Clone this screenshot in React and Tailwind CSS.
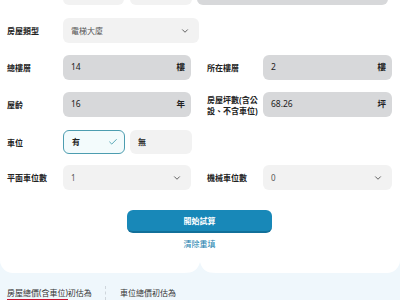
import { Check, ChevronDown } from 'lucide-react'

const FONT = { fontFamily: '"Noto Sans", "Noto Sans CJK TC", sans-serif' }

function Label({ children }) {
  return (
    <div className="w-[56px] shrink-0 text-[8px] leading-[11px] font-bold text-[#222]">{children}</div>
  )
}

function Filled({ value, unit, w = 'w-[128px]' }) {
  return (
    <div className={`${w} h-[25px] rounded-[6px] bg-[#d7d8da] flex items-center justify-between pl-[8px] pr-[6px] text-[8.5px] text-[#222]`}>
      <span>{value}</span>
      <span className="font-bold">{unit}</span>
    </div>
  )
}

function Select({ value, w = 'w-[128px]' }) {
  return (
    <div className={`${w} h-[25px] rounded-[6px] bg-[#f2f2f2] flex items-center justify-between pl-[8px] pr-[9px] text-[8px] text-[#555]`}>
      <span>{value}</span>
      <ChevronDown size={10} strokeWidth={2} className="text-[#444]" />
    </div>
  )
}

export default function App() {
  return (
    <div className="w-[400px] h-[300px] overflow-hidden bg-[#eff7fc]" style={FONT}>
      <div className="relative bg-white rounded-b-[13px] pl-[7px] pr-[8px] pb-[23px]">
        {/* cut-off row above */}
        <div className="flex mt-[-20px] h-[25px]">
          <div className="w-[56px]" />
          <div className="w-[61px] rounded-[6px] bg-[#f2f2f2]" />
          <div className="w-[62px] ml-[6px] rounded-[6px] bg-[#f2f2f2]" />
          <div className="w-[191px] ml-[5px] rounded-[6px] bg-[#d7d8da]" />
        </div>

        <div className="flex items-center mt-[13px]">
          <Label>房屋類型</Label>
          <Select value="電梯大廈" w="w-[136px]" />
        </div>

        <div className="flex items-center gap-[16px] mt-[12px]">
          <div className="flex items-center">
            <Label>總樓層</Label>
            <Filled value="14" unit="樓" />
          </div>
          <div className="flex items-center">
            <Label>所在樓層</Label>
            <Filled value="2" unit="樓" w="w-[129px]" />
          </div>
        </div>

        <div className="flex items-center gap-[16px] mt-[12px]">
          <div className="flex items-center">
            <Label>屋齡</Label>
            <Filled value="16" unit="年" />
          </div>
          <div className="flex items-center">
            <Label>房屋坪數(含公設、不含車位)</Label>
            <Filled value="68.26" unit="坪" w="w-[129px]" />
          </div>
        </div>

        <div className="flex items-center mt-[13px]">
          <Label>車位</Label>
          <div className="w-[62px] h-[24px] rounded-[6px] border-[1.5px] border-[#4d9db0] bg-[#f3fbfc] flex items-center justify-between pl-[8px] pr-[6px] text-[8px] font-bold text-[#222]">
            <span>有</span>
            <Check size={10} strokeWidth={2} className="text-[#3a98a8]" />
          </div>
          <div className="w-[62px] h-[24px] ml-[5px] rounded-[6px] bg-[#f2f2f2] flex items-center pl-[8px] text-[8px] font-bold text-[#222]">
            無
          </div>
        </div>

        <div className="flex items-center gap-[16px] mt-[11px]">
          <div className="flex items-center">
            <Label>平面車位數</Label>
            <Select value="1" />
          </div>
          <div className="flex items-center">
            <Label>機械車位數</Label>
            <Select value="0" w="w-[129px]" />
          </div>
        </div>

        <div className="flex flex-col items-center mt-[20px]">
          <button className="w-[145px] h-[23px] rounded-[6px] bg-[#1888b8] border-b-[2px] border-[#12709a] text-white text-[8px] font-bold">
            開始試算
          </button>
          <div className="mt-[5px] text-[8px] text-[#1a7fae]">清除重填</div>
        </div>

        <svg className="absolute left-1/2 -translate-x-1/2 bottom-0" width="32" height="11" viewBox="0 0 32 11">
          <path d="M0 11 C 9 11, 14 8, 16 0 C 18 8, 23 11, 32 11 Z" fill="#eff7fc" />
        </svg>
      </div>

      <div className="flex items-center pl-[7px] mt-[13px] text-[8px] text-[#333]">
        <div className="w-[98px] shrink-0">
          <span className="border-b-[1.5px] border-[#c8102e] pb-[1px]">房屋總價(含車位)</span>
          <span>初估為</span>
        </div>
        <div className="h-[14px] border-l border-dashed border-[#cfd6dc]" />
        <div className="pl-[14px]">車位總價初估為</div>
      </div>
    </div>
  )
}
